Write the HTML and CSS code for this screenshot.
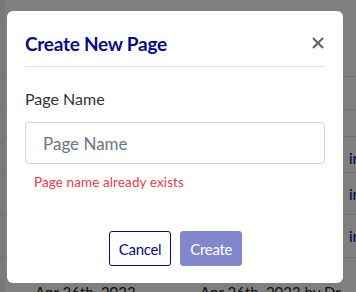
FILE: index.html
```html
<!DOCTYPE html>
<html>
<head>
<meta charset="utf-8">
<link rel="stylesheet" href="styles.css">
</head>
<body>
<div class="page">
  <div class="row r1"></div>
  <div class="row r2"></div>
  <div class="row r3"></div>
  <div class="row r4"><span class="cell-end">ir</span></div>
  <div class="row r5"><span class="cell-end">ir</span></div>
  <div class="row r6"><span class="cell-end">ir</span></div>
  <div class="row r7"><span class="date">Apr 26th, 2023</span><span class="date d2">Apr 26th, 2023 by Dr</span></div>
</div>
<div class="overlay"></div>
<div class="modal">
  <div class="modal-header">
    <h2 class="modal-title">Create New Page</h2>
    <button class="close" aria-label="Close">
      <svg width="12" height="12" viewBox="0 0 12 12"><path d="M1 1L11 11M11 1L1 11" stroke="#666" stroke-width="2.2" stroke-linecap="butt"/></svg>
    </button>
  </div>
  <div class="modal-body">
    <label class="label" for="pn">Page Name</label>
    <input id="pn" class="input" type="text" placeholder="Page Name">
    <div class="error">Page name already exists</div>
  </div>
  <div class="modal-footer">
    <button class="btn btn-outline">Cancel</button>
    <button class="btn btn-primary" disabled>Create</button>
  </div>
</div>
</body>
</html>
```
FILE: styles.css
```css
html, body {
  margin: 0;
  padding: 0;
  width: 356px;
  height: 292px;
  overflow: hidden;
  font-family: Lato, "Liberation Sans", sans-serif;
}
.page {
  background: #fff;
  height: 292px;
  border-left: 5px solid #f2f2f2;
}
.row {
  border-bottom: 1px solid #ddd;
  position: relative;
  color: #222;
  font-size: 15px;
}
.r1 { height: 76px; }
.r2 { height: 32px; }
.r3 { height: 26px; }
.r4 { height: 35px; }
.r5 { height: 41px; }
.r6 { height: 42px; }
.r7 { height: 40px; }
.cell-end { position: absolute; left: 344px; top: 12px; color: #00008b; }
.date { position: absolute; left: 30px; top: 25px; }
.d2 { left: 195px; }
.overlay {
  position: fixed;
  inset: 0;
  background: rgba(0, 0, 0, 0.5);
}
.modal {
  position: fixed;
  left: 7px;
  top: 11px;
  width: 336px;
  height: 272px;
  background: #fff;
  border-radius: 6px;
  box-sizing: border-box;
  padding: 0 18px 0 18px;
  display: flex;
  flex-direction: column;
}
.modal-header {
  display: flex;
  justify-content: space-between;
  align-items: center;
  height: 55px;
  border-bottom: 1px solid #dcdde8;
}
.modal-title {
  margin: 0;
  padding-top: 10px;
  font-size: 19px;
  font-weight: 700;
  letter-spacing: -0.25px;
  color: #0a0a8c;
}
.close {
  border: 0;
  background: none;
  padding: 0;
  margin-right: 1px;
  margin-top: 9px;
  display: flex;
}
.modal-body {
  display: flex;
  flex-direction: column;
  padding-top: 22px;
}
.label {
  font-size: 16px;
  color: #333;
  line-height: 20px;
}
.input {
  margin-top: 13px;
  height: 42px;
  box-sizing: border-box;
  border: 1px solid #cfd4dc;
  border-radius: 4px;
  padding: 0 17px;
  font-family: inherit;
  font-size: 17px;
  outline: none;
}
.input::placeholder { color: #6b7586; }
.error {
  margin-top: 10px;
  padding-left: 9px;
  font-size: 13.5px;
  letter-spacing: 0.1px;
  color: #e8384f;
}
.modal-footer {
  margin-top: auto;
  margin-bottom: 17px;
  display: flex;
  justify-content: center;
  gap: 9px;
  padding-left: 1px;
}
.btn {
  height: 35px;
  padding: 0 9px;
  font-family: inherit;
  font-size: 15px;
  letter-spacing: -0.3px;
  border-radius: 3px;
}
.btn-outline {
  background: #fff;
  border: 1px solid #0a0a8c;
  color: #0a0a8c;
}
.btn-primary {
  background: #8087cc;
  border: 1px solid #8087cc;
  color: #fff;
}
```
